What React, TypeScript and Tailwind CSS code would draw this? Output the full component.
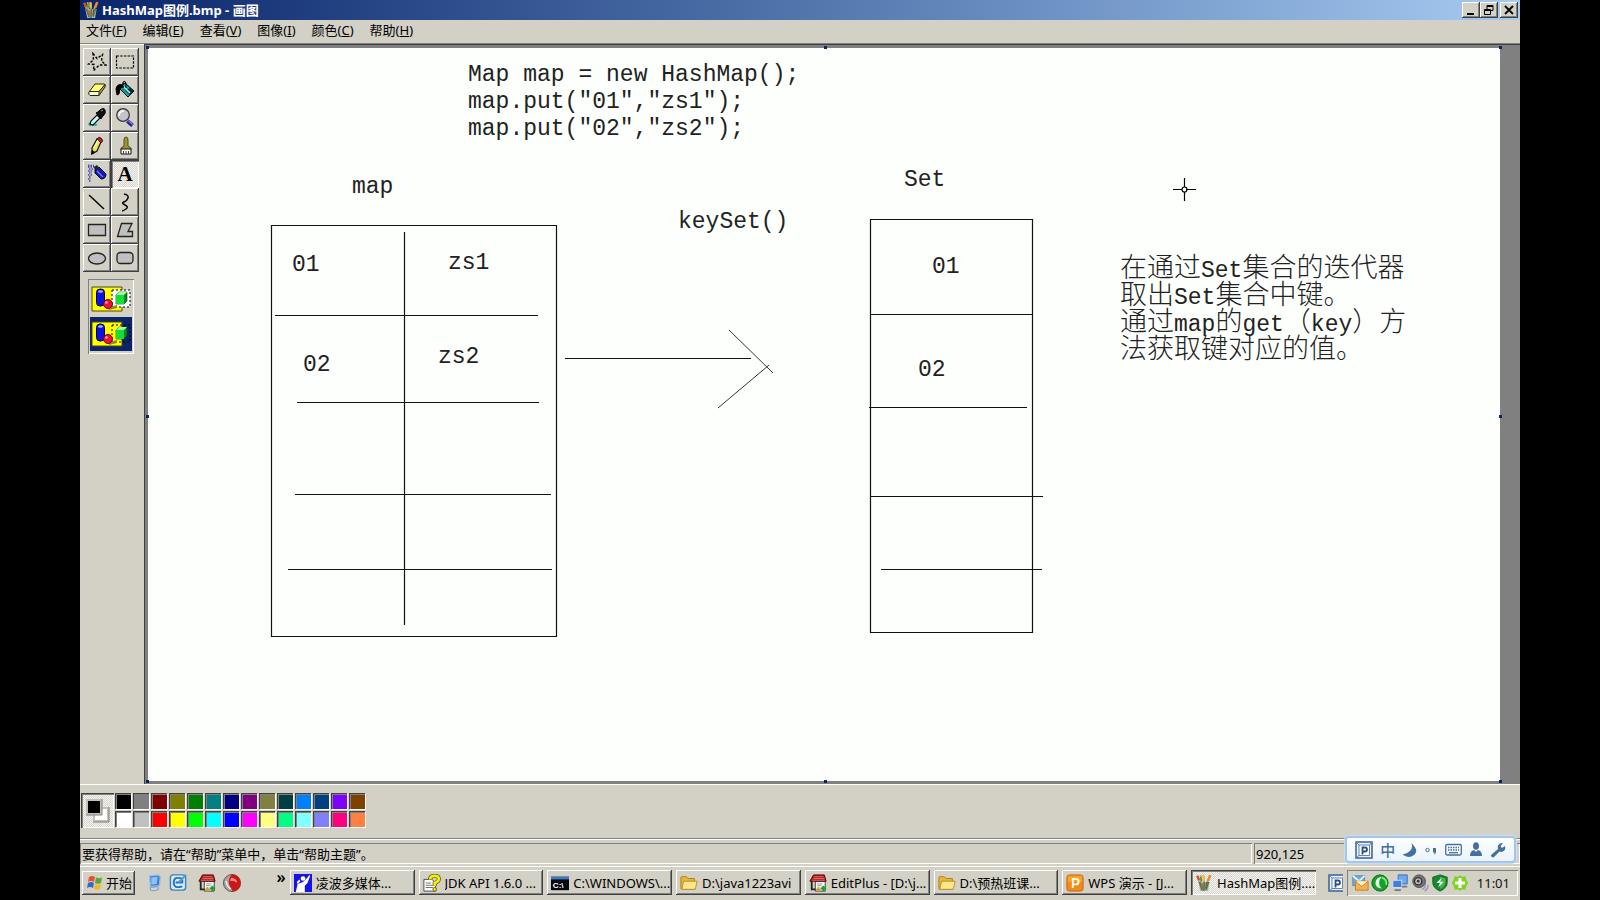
import type { ReactNode } from "react";

const UI = "font-['Noto_Sans','Noto_Sans_CJK_SC',sans-serif]";
const RAISED = "shadow-[inset_-1px_-1px_0_#404040,inset_1px_1px_0_#ffffff,inset_-2px_-2px_0_#808080]";
const PRESSED = "shadow-[inset_1px_1px_0_#404040,inset_2px_2px_0_#808080,inset_-1px_-1px_0_#ffffff]";
const SUNKEN = "shadow-[inset_1px_1px_0_#808080,inset_-1px_-1px_0_#ffffff]";
const DITHER = "bg-[repeating-conic-gradient(#f6f4f0_0_25%,#d8d5cc_0_50%)] bg-[length:2px_2px]";

function PaintIcon() {
  return (
    <svg width="18" height="18" viewBox="0 0 16 16" aria-hidden="true">
      <path d="M2 2l3 7M5 1l1 8M8 2v7M13 2l-3 7" stroke="#c9a27a" strokeWidth="1.6" fill="none" />
      <path d="M2 1.5l1.6 4" stroke="#d6492e" strokeWidth="2" />
      <path d="M7.5 1v5" stroke="#e8c33c" strokeWidth="2" />
      <path d="M13.6 1l-2 5" stroke="#e98a2b" strokeWidth="2.2" />
      <path d="M5 2.5l.6 4" stroke="#4f9b46" strokeWidth="1.5" />
      <path d="M3 7h10l-1.4 8.2H4.6z" fill="#a9b7b8" />
      <path d="M4 7l2.4 7.4M8.3 7l-.4 8M12 7l-2.2 7" stroke="#4b7d4e" strokeWidth="1.5" />
      <path d="M6 8l1 5" stroke="#d4552c" strokeWidth="1.4" />
      <path d="M10.4 7l-.8 6" stroke="#7c5a36" strokeWidth="1.2" />
    </svg>
  );
}

function Svg({ children, size = 20 }: { children: ReactNode; size?: number }) {
  return (
    <svg width={size} height={size} viewBox="0 0 20 20" fill="none" aria-hidden="true">
      {children}
    </svg>
  );
}

const tools: { name: string; icon: ReactNode; active?: boolean }[] = [
  {
    name: "任意形状的裁剪",
    icon: <Svg><path d="M6 1.500l4 5 5.500-4-1 6.500 4.500 4h-6.500L6.500 18.500l.5-6-5.500-.5 5-4z" stroke="#000" strokeWidth="1.400" strokeDasharray="2.500 1.700" /></Svg>,
  },
  {
    name: "选定",
    icon: <Svg><path d="M1.500 4h17v12h-17z" stroke="#000" strokeWidth="1.200" strokeDasharray="2.500 1.200" /></Svg>,
  },
  {
    name: "橡皮",
    icon: (
      <Svg>
        <path d="M2 12l6-8h9q2 0 1 3l-6 8H3q-2 0-1-3z" fill="#a8a840" />
        <path d="M2 11l6-7h10l-6 7z" fill="#ffff66" />
        <path d="M2 11.500h10v4H2z" fill="#ffffc8" />
        <path d="M2 12l6-8h9q2 0 1 3l-6 8.500H3q-2-1-1-3.500M2.500 11.500H12v4M12 11.500l6-7" stroke="#222" />
      </Svg>
    ),
  },
  {
    name: "用颜色填充",
    icon: (
      <Svg>
        <path d="M6 5l4-2 9 8-6 6-8-8z" fill="#189a9a" stroke="#000" />
        <path d="M8 8l7 7 4-4-4-3-4 2z" fill="#002d35" />
        <path d="M8 6l7 7" stroke="#a9ffff" strokeWidth="1.500" />
        <path d="M8 5Q2 3 1 9l1 6 2-1 1-6 4-1" fill="#000" stroke="#000" />
        <path d="M8 5V2q2-2 3 1v5" stroke="#000" />
      </Svg>
    ),
  },
  {
    name: "取色",
    icon: (
      <Svg>
        <path d="M1 15h7l3 2-3 1H2zM3 13h4l-1 4H2z" fill="#27b5b5" />
        <path d="M10 7l3 3-7 7-3-1 1-3z" fill="#c6ffff" stroke="#111" strokeWidth="1.200" />
        <path d="M9 5l2-1 2-2q4-3 5 0t-1 5l-2 2-1 2z" fill="#111" stroke="#000" />
        <path d="M14 3l2-1" stroke="#999" />
      </Svg>
    ),
  },
  {
    name: "放大镜",
    icon: (
      <Svg>
        <path d="M12.500 13l5 4.500" stroke="#202098" strokeWidth="4" />
        <path d="M13.500 12.500l4 4" stroke="#8989e8" strokeWidth="1.200" />
        <circle cx="8" cy="7" r="6.300" fill="#c4c4c8" stroke="#333" strokeWidth="1.200" />
        <path d="M4 8q0-5 5-5" stroke="#fff" strokeWidth="1.500" />
      </Svg>
    ),
  },
  {
    name: "铅笔",
    icon: (
      <Svg>
        <path d="M5 12l5-9 4 3-4 9-5 3z" fill="#e8e850" stroke="#111" strokeWidth="1.200" />
        <path d="M10 3q2-3 4.500-.5T14 7z" fill="#c02020" stroke="#401010" />
        <path d="M7 12l4-8" stroke="#fff" />
        <path d="M5 14l3 2-4 3z" fill="#000" />
      </Svg>
    ),
  },
  {
    name: "刷子",
    icon: (
      <Svg>
        <path d="M9 10V4q0-3 2-3t2 3v6l3 2v2H6v-2z" fill="#9a962c" stroke="#555017" />
        <path d="M6 13h10v5H6z" fill="#fff" stroke="#111" />
        <path d="M8.500 15v3M11 15v3M13.500 15v3" stroke="#444" />
      </Svg>
    ),
  },
  {
    name: "喷枪",
    icon: (
      <Svg>
        <path d="M1 3h9M2 5h6M1 7h5M2 9h3M1 11h4M2 13h2M1 15h3M2 17h2M1 1.500h6" stroke="#4646b8" strokeWidth="1.500" strokeDasharray="1.500 1" />
        <path d="M8 6l4-3 7 7q0 5-5 5L8 9z" fill="#1616b4" stroke="#000" />
        <path d="M7 3l3-2 2 3-3 3z" fill="#222" />
        <path d="M10 7l6 6" stroke="#5c82ff" strokeWidth="1.500" />
      </Svg>
    ),
  },
  {
    name: "文字",
    active: true,
    icon: <span className="font-['Liberation_Serif',serif] text-[21px] leading-5 font-bold text-black">A</span>,
  },
  { name: "直线", icon: <Svg><path d="M2 3l15 14" stroke="#000" strokeWidth="1.500" /></Svg> },
  { name: "曲线", icon: <Svg><path d="M9 2q5 1 4 4t-4 4 1 3 1 4-4 2" stroke="#000" strokeWidth="1.500" /></Svg> },
  { name: "矩形", icon: <Svg><path d="M1.500 4.500h17v11h-17z" fill="#c0c0c0" stroke="#222" strokeWidth="1.300" /></Svg> },
  { name: "多边形", icon: <Svg><path d="M6.500 3.500h10.500L13 11.500h4.500v5h-15z" fill="#c0c0c0" stroke="#222" strokeWidth="1.300" /></Svg> },
  { name: "椭圆", icon: <Svg><ellipse cx="10" cy="10.500" rx="8.500" ry="5.500" fill="#c0c0c0" stroke="#222" strokeWidth="1.300" /></Svg> },
  { name: "圆角矩形", icon: <Svg><rect x="2" y="4.500" width="16" height="11" rx="3.500" fill="#c0c0c0" stroke="#222" strokeWidth="1.300" /></Svg> },
];

function ShapesIcon({ opaque }: { opaque?: boolean }) {
  return (
    <svg width="42" height="30" viewBox="0 0 42 30" aria-hidden="true">
      <path d="M2 3h30v24H2z" fill="#ffff00" stroke="#4a4a00" />
      {opaque && <path d="M22 6h18v17H22z" fill="#fff" />}
      <path d="M22 6h18v17H22z" fill="none" stroke="#000" strokeDasharray="2 2" />
      <rect x="6.500" y="5" width="8" height="17" rx="3.500" fill="#1111dd" stroke="#000060" />
      <ellipse cx="10.500" cy="7.500" rx="2.500" ry="1.300" fill="#a5b4ff" />
      <path d="M19 23l8-2v3l-8 2z" fill="#8a8a30" />
      <circle cx="18" cy="20" r="4.500" fill="#ee1133" stroke="#700" />
      <circle cx="16.500" cy="18.500" r="1.300" fill="#ffb0b0" />
      <path d="M26 11l3-3h8v9l-3 3h-8z" fill="#0c8a18" stroke="#033" strokeWidth=".6" />
      <path d="M26 11h8v9h-8z" fill="#18dd33" />
      <path d="M26 11l3-3h8l-3 3z" fill="#a0ffa0" />
    </svg>
  );
}

const palette: [string, string][] = [
  ["黑", "bg-[#000000]"], ["深灰", "bg-[#808080]"], ["暗红", "bg-[#800000]"], ["橄榄", "bg-[#808000]"],
  ["深绿", "bg-[#008000]"], ["蓝绿", "bg-[#008080]"], ["海军蓝", "bg-[#000080]"], ["紫", "bg-[#800080]"],
  ["卡其", "bg-[#808040]"], ["墨绿", "bg-[#004040]"], ["天蓝", "bg-[#0080ff]"], ["藏青", "bg-[#004080]"],
  ["蓝紫", "bg-[#8000ff]"], ["棕", "bg-[#804000]"],
  ["白", "bg-[#ffffff]"], ["浅灰", "bg-[#c0c0c0]"], ["红", "bg-[#ff0000]"], ["黄", "bg-[#ffff00]"],
  ["绿", "bg-[#00ff00]"], ["青", "bg-[#00ffff]"], ["蓝", "bg-[#0000ff]"], ["品红", "bg-[#ff00ff]"],
  ["浅黄", "bg-[#ffff80]"], ["春绿", "bg-[#00ff80]"], ["浅青", "bg-[#80ffff]"], ["淡紫", "bg-[#8080ff]"],
  ["玫红", "bg-[#ff0080]"], ["橙", "bg-[#ff8040]"],
];

const menus = [["文件", "F"], ["编辑", "E"], ["查看", "V"], ["图像", "I"], ["颜色", "C"], ["帮助", "H"]];

const labels: { text: string; place: string }[] = [
  { text: "map", place: "left-[204px] top-[126px]" },
  { text: "keySet()", place: "left-[530px] top-[161px]" },
  { text: "Set", place: "left-[756px] top-[119px]" },
  { text: "01", place: "left-[144px] top-[204px]" },
  { text: "zs1", place: "left-[300px] top-[202px]" },
  { text: "02", place: "left-[155px] top-[304px]" },
  { text: "zs2", place: "left-[290px] top-[296px]" },
  { text: "01", place: "left-[784px] top-[206px]" },
  { text: "02", place: "left-[770px] top-[309px]" },
];

function Latin({ children }: { children: ReactNode }) {
  return <span className="text-[23px] leading-[0px] font-normal">{children}</span>;
}

function Drawing() {
  return (
    <div className="relative h-full min-h-[640px] w-full overflow-hidden bg-[#fdfffd] text-[23px] leading-[27px] text-[#222] font-['Liberation_Mono','Noto_Sans_CJK_SC',monospace]">
      <svg className="absolute inset-0 h-full w-full" fill="none" stroke="#111" strokeWidth="1.200" aria-label="HashMap 图例">
        <path d="M123.500 177.500h285v411h-285zM256.500 184v393M127 267.500h263M149 354.500h242M147 446.500h256M140 521.500h264" />
        <path d="M417 310.500h186" />
        <path d="M581 282l44 43M570 360l51-43" strokeWidth="1" stroke="#333" />
        <path d="M722.500 171.500h162v413h-162zM722 266.500h162M721 359.500h158M722 448.500h173M733 521.500h161" />
        <path d="M1025 141.500h9m4 0h10M1036.500 130v9m0 5v9" stroke="#000" />
        <circle cx="1036.500" cy="141.500" r="2.500" stroke="#000" />
      </svg>
      <pre className="absolute top-[14px] left-[320px] font-[inherit]">{`Map map = new HashMap();
map.put("01","zs1");
map.put("02","zs2");`}</pre>
      {labels.map((l) => (
        <span key={l.place} className={`absolute ${l.place}`}>{l.text}</span>
      ))}
      <p className="absolute top-[209px] left-[972px] text-[27px] leading-[27px] font-light whitespace-nowrap">
        在通过<Latin>Set</Latin>集合的迭代器<br />
        取出<Latin>Set</Latin>集合中键。<br />
        通过<Latin>map</Latin>的<Latin>get</Latin>（<Latin>key</Latin>）方<br />
        法获取键对应的值。
      </p>
    </div>
  );
}

const handles = [
  "-left-0.5 -top-0.5", "left-1/2 -top-0.5", "-right-0.5 -top-0.5",
  "-left-0.5 top-1/2", "-right-0.5 top-1/2",
  "-left-0.5 -bottom-0.5", "left-1/2 -bottom-0.5", "-right-0.5 -bottom-0.5",
];

function FolderIcon() {
  return (
    <Svg size={18}>
      <path d="M1 4q0-1 1-1h5l2 2h7v12H2q-1 0-1-1z" fill="#e8b83a" stroke="#a97d1a" />
      <path d="M4 8h15l-2 9H2z" fill="#ffe88a" stroke="#b98c22" />
    </Svg>
  );
}

function EditPlusIcon() {
  return (
    <Svg size={18}>
      <path d="M7 8h11v11H7z" fill="#fff" stroke="#333" />
      <path d="M5 1h12l2 7H1z" fill="#b41f1f" stroke="#400" />
      <path d="M6 3h10M5 5h12M3.500 7h14" stroke="#f08080" strokeWidth=".8" />
      <path d="M3 8v9h4" stroke="#222" strokeWidth="2" />
      <path d="M9 11h6M9 13h5" stroke="#888" />
      <path d="M8 17h5m-2.500-2.500v5" stroke="#d69a1a" strokeWidth="2" />
      <path d="M13 16h6m-3-3v6" stroke="#1f9a2f" strokeWidth="2.400" />
    </Svg>
  );
}

const tasks: { title: string; icon: ReactNode; active?: boolean }[] = [
  {
    title: "凌波多媒体...",
    icon: (
      <Svg size={18}>
        <path d="M0 0h20v20H0z" fill="#1414e6" />
        <circle cx="10" cy="5" r="2.600" fill="#fff" />
        <path d="M2 20l2-9 6-2 5-5 2-3 1 1-3 8-3 3v7zM3 9l3-3 1 2-3 3z" fill="#fff" />
      </Svg>
    ),
  },
  {
    title: "JDK API 1.6.0 ...",
    icon: (
      <Svg size={18}>
        <path d="M1 6h9l4 4v9H1z" fill="#fff" stroke="#444" />
        <path d="M3 10h6M3 12.500h8M3 15h8" stroke="#666" />
        <path d="M8 6q0-4 5-4t4.500 4q0 2-4.500 4v3" stroke="#5a5a00" strokeWidth="4.500" />
        <path d="M8 6q0-4 5-4t4.500 4q0 2-4.500 4v3" stroke="#f6ee10" strokeWidth="3" />
        <circle cx="13" cy="17" r="2" fill="#f6ee10" stroke="#5a5a00" />
      </Svg>
    ),
  },
  {
    title: "C:\\WINDOWS\\...",
    icon: (
      <Svg size={18}>
        <path d="M0 3h20v15H0z" fill="#050a10" />
        <path d="M0 3h20v3H0z" fill="#3f78c8" />
        <text x="2" y="15" fontSize="9" fontWeight="700" fill="#fff" fontFamily="Liberation Sans">C:\</text>
      </Svg>
    ),
  },
  { title: "D:\\java1223avi", icon: <FolderIcon /> },
  { title: "EditPlus - [D:\\j...", icon: <EditPlusIcon /> },
  { title: "D:\\预热班课...", icon: <FolderIcon /> },
  {
    title: "WPS 演示 - [J...",
    icon: (
      <Svg size={18}>
        <rect x="1" y="1" width="18" height="18" rx="3" fill="#f28a14" stroke="#cf5c0b" />
        <path d="M2 2h16v7H2z" fill="#ffb52f" opacity=".6" />
        <path d="M7.500 15.500V5.500h3.500q3 0 3 3t-3 3H7.500" stroke="#fff" strokeWidth="2" />
      </Svg>
    ),
  },
  { title: "HashMap图例....", icon: <PaintIcon />, active: true },
];

function PBadge() {
  return (
    <svg width="18" height="18" viewBox="0 0 18 18" fill="none" aria-hidden="true">
      <path d="M1 1h16v16H1z" fill="#e9f1fa" stroke="#3b5f94" strokeWidth="1.500" />
      <path d="M4 4h10.500v10.500H4z" fill="#fff" stroke="#5f83b5" />
      <path d="M1 1l3 3M4 14.500L1 17M14.500 4L17 1" stroke="#5f83b5" />
      <path d="M7.500 13.500v-7H10q2 0 2 2t-2 2H7.500" stroke="#2d4f86" strokeWidth="1.800" />
    </svg>
  );
}

function ImeBar() {
  return (
    <div className="absolute right-1 bottom-[37px] flex h-[27px] w-[171px] items-center justify-between rounded border-2 border-[#a3c6ea] bg-gradient-to-b from-white to-[#e9f3fc] px-2 text-[#44709f] shadow-[0_0_0_1px_#c8def2]">
      <PBadge />
      <span className="text-[15px] leading-5 font-medium">中</span>
      <svg width="16" height="16" viewBox="0 0 16 16" fill="#44709f" aria-hidden="true"><path d="M9.500 1q3 9-9 11.500 6 4.500 11.500.5T9.500 1z" /></svg>
      <svg width="12" height="14" viewBox="0 0 12 14" aria-hidden="true">
        <circle cx="2.500" cy="7" r="1.700" fill="none" stroke="#44709f" />
        <path d="M8 5h3v4q0 2-2.500 3 1-1 1-2.500H8z" fill="#44709f" />
      </svg>
      <svg width="17" height="13" viewBox="0 0 17 13" fill="none" stroke="#44709f" aria-hidden="true">
        <rect x=".7" y="1.500" width="15.600" height="10.500" rx="1.500" strokeWidth="1.300" />
        <path d="M3 4.500h11M3 7h11" strokeWidth="1.500" strokeDasharray="1.500 1" />
        <path d="M4 9.700h9" strokeWidth="1.300" />
      </svg>
      <svg width="14" height="15" viewBox="0 0 14 15" fill="#44709f" aria-hidden="true">
        <ellipse cx="7" cy="4" rx="3" ry="3.800" />
        <path d="M1 14q0-5 4-6l2 2 2-2q4 1 4 6z" />
      </svg>
      <svg width="16" height="16" viewBox="0 0 16 16" fill="#44709f" aria-hidden="true">
        <path d="M1 13L8 7Q7 3 10 1.500q2-1 3-.3L10.500 4l1.500 2 3-2q1 4-2 5.500-2 .8-3.500 0L3.500 15.500Q1 15.500 1 13z" />
      </svg>
    </div>
  );
}

function QuickLaunch() {
  return (
    <div className="flex items-center gap-1.5 pl-2.5">
      <a href="#desktop" aria-label="显示桌面">
        <Svg size={18}>
          <path d="M5 2l10-1 2 2-1 10-10 1z" fill="#3d7ed2" stroke="#9bbce6" strokeWidth="1.500" />
          <path d="M7 4l7-1-1 8-6 1z" fill="#8cc2fa" />
          <path d="M6 15l8-1 1 3q-5 3-9 1z" fill="#c6d6ea" stroke="#7992b5" />
        </Svg>
      </a>
      <a href="#mail" aria-label="邮件">
        <Svg size={19}>
          <rect x="1.500" y="2" width="16" height="16" rx="3" fill="#d8ecfb" stroke="#3983be" strokeWidth="1.500" />
          <path d="M14 6Q5 3 5 10t9 4M7 10h7V7" stroke="#2678bd" strokeWidth="2" />
          <path d="M10 10l8-8" stroke="#4a9ad3" strokeWidth="2" />
        </Svg>
      </a>
      <a href="#editplus" aria-label="EditPlus" className="ml-1"><EditPlusIcon /></a>
      <a href="#player" aria-label="播放器">
        <Svg size={20}>
          <circle cx="10" cy="10" r="8.500" fill="#a9a7a7" stroke="#6b4a4a" />
          <path d="M10 1.500Q3 8 11 18.500q8-1 7.500-9T10 1.500z" fill="#c91818" />
          <path d="M9 5q6 0 6 5-3-3-7-2z" fill="#ff8d80" />
          <path d="M4 8q1 6 5 8" stroke="#efefef" strokeWidth="1.500" />
        </Svg>
      </a>
    </div>
  );
}

function Tray() {
  return (
    <div className={`flex h-[26px] shrink-0 items-center gap-0.5 pr-2 pl-1 ${SUNKEN}`}>
      <Svg size={18}>
        <path d="M2 2h13v11H2z" fill="#6fa9dc" stroke="#5586b5" />
        <path d="M2 2l7 6 6-6" stroke="#e4f2ff" strokeWidth="2" />
        <path d="M5 8h14v10H5z" fill="#f6b04d" stroke="#c97c1d" />
        <path d="M5 8l7 6 7-6" fill="#fff3d0" stroke="#c97c1d" />
      </Svg>
      <Svg size={18}>
        <circle cx="10" cy="10" r="9" fill="#14a224" stroke="#0b5f16" />
        <path d="M12 3Q5 4 5 10t7 6q-3-2-3-6t3-7z" fill="#eaffea" />
        <path d="M12 4q6 2 5 8" stroke="#7dee7d" strokeWidth="2" />
      </Svg>
      <Svg size={18}>
        <path d="M8 1h10v10H8z" fill="#6cabf4" stroke="#3a67a8" />
        <path d="M2 7h10v8H2z" fill="#3e7fe0" stroke="#dce6f2" />
        <path d="M4 18h7M12 14h6" stroke="#6b7a90" strokeWidth="2" />
      </Svg>
      <Svg size={18}>
        <circle cx="9" cy="8" r="7" fill="#777" stroke="#444" />
        <circle cx="8" cy="8" r="4" fill="#bbb" stroke="#333" strokeWidth="1.500" />
        <circle cx="8" cy="8" r="1.500" fill="#333" />
        <path d="M12 17q4-1 4-6M15 19q4-2 4-7" stroke="#8d8dc5" strokeWidth="1.300" />
      </Svg>
      <Svg size={18}>
        <path d="M10 1l8 2.500v6q0 6-8 9.500-8-3.500-8-9.500v-6z" fill="#148a2a" stroke="#0b5a1a" />
        <path d="M10 3l6 2v4q0 5-6 8z" fill="#3cb648" />
        <path d="M12 4l-6 6h4l-2 5 6-6.500h-4z" fill="#fff" />
      </Svg>
      <Svg size={18}>
        <path d="M10 1l2 2 4-.5 1 4 2 3.500-2 3.500-1 4-4-.5-2 2-2-2-4 .5-1-4L1 10l2-3.500 1-4 4 .5z" fill="#7ed321" />
        <path d="M10 4.500v11M4.500 10h11" stroke="#fff" strokeWidth="3.500" />
      </Svg>
      <time className="ml-1.5 text-[13px] text-[#111]">11:01</time>
    </div>
  );
}

export default function App() {
  return (
    <div className={`min-h-screen bg-black px-20 ${UI} text-[13px] leading-5 text-black`}>
      <div className="relative flex min-h-screen flex-col bg-[#d3d0c6]">
        <header className="flex h-5 items-center bg-gradient-to-r from-[#0a246a] to-[#a6caf0] pr-0.5 pl-0.5">
          <PaintIcon />
          <h1 className="ml-0.5 flex-1 text-[13px] leading-5 font-bold text-white">HashMap图例.bmp - 画图</h1>
          <button aria-label="最小化" className={`h-4 w-[18px] bg-[#d3d0c6] ${RAISED}`}>
            <svg width="18" height="16" aria-hidden="true"><path d="M5 11h7v2H5z" /></svg>
          </button>
          <button aria-label="还原" className={`h-4 w-[18px] bg-[#d3d0c6] ${RAISED}`}>
            <svg width="18" height="16" fill="none" stroke="#000" aria-hidden="true">
              <path d="M7 7V3.500h6v5h-2.500M7 4.500h6M4.500 7.500h6v5h-6zM4.500 8.500h6" />
            </svg>
          </button>
          <button aria-label="关闭" className={`ml-0.5 h-4 w-[18px] bg-[#d3d0c6] ${RAISED}`}>
            <svg width="18" height="16" aria-hidden="true"><path d="M5 4l8 8M13 4l-8 8" stroke="#000" strokeWidth="1.800" /></svg>
          </button>
        </header>

        <nav className="flex h-[23px] items-start gap-4 px-1.5">
          {menus.map(([name, key]) => (
            <button key={key}>{name}(<u>{key}</u>)</button>
          ))}
        </nav>

        <main className="flex flex-1 border-t border-[#808080]">
          <aside className="flex w-16 shrink-0 flex-col items-center border-t border-white pt-[3px] pr-1 pl-0.5">
            <div className="grid grid-cols-2">
              {tools.map((t) => (
                <button key={t.name} aria-label={t.name} className={`flex size-7 items-center justify-center ${t.active ? `${DITHER} ${PRESSED}` : RAISED}`}>
                  {t.icon}
                </button>
              ))}
            </div>
            <div className={`mt-[7px] flex flex-col px-0.5 pt-0.5 pb-[3px] ${SUNKEN}`}>
              <button aria-label="不透明处理" className="flex h-9 items-center justify-center"><ShapesIcon opaque /></button>
              <button aria-label="透明处理" className="flex h-[34px] items-center justify-center bg-[#0a246a]"><ShapesIcon /></button>
            </div>
          </aside>
          <section className="flex min-w-0 flex-1 border-t border-l border-[#404040] bg-[#808080] pt-[3px] pr-5 pb-[3px] pl-[3px]">
            <div className="relative flex min-w-0 flex-1">
              <Drawing />
              {handles.map((h) => (
                <span key={h} className={`absolute size-[3px] bg-[#0a246a] ${h}`} />
              ))}
            </div>
          </section>
        </main>

        <section aria-label="颜料盒" className="flex h-[54px] items-start border-t border-white pt-2 pl-px">
          <div className={`mr-px flex h-[35px] w-[33px] items-center justify-center ${DITHER} ${PRESSED}`}>
            <svg width="25" height="25" aria-hidden="true">
              <path d="M9 10h14v13H9z" fill="#fff" stroke="#c4c0b8" strokeWidth="2" />
              <path d="M8 24h16V9" fill="none" stroke="#808080" />
              <path d="M2 2h14v14H2z" fill="#000" stroke="#c4c0b8" strokeWidth="2" />
              <path d="M1 17h16V1" fill="none" stroke="#808080" />
            </svg>
          </div>
          <div className="grid grid-cols-14 gap-0.5">
            {palette.map(([name, bg]) => (
              <button key={name} aria-label={name} className={`size-4 ${bg} shadow-[inset_1px_1px_0_#404040,inset_2px_2px_0_#808080,1px_1px_0_#ffffff]`} />
            ))}
          </div>
        </section>

        <footer className="flex h-7 gap-0.5 border-t border-[#808080] pt-1 pb-0.5 shadow-[inset_0_1px_0_#ffffff]">
          <p className={`flex-1 pl-0.5 leading-[22px] ${SUNKEN}`}>要获得帮助，请在“帮助”菜单中，单击“帮助主题”。</p>
          <p className={`w-[132px] pl-0.5 leading-[22px] ${SUNKEN}`}>920,125</p>
          <p className={`w-[132px] ${SUNKEN}`} />
        </footer>

        <div className="flex h-[34px] items-center border-t border-white pr-0.5 pb-0.5 pl-0.5">
          <button className={`flex h-6 w-[53px] items-center gap-0.5 pl-1 ${RAISED}`}>
            <svg width="18" height="18" viewBox="0 0 18 18" aria-hidden="true">
              <path d="M3 3q3-2 6 0L8 8q-3-2-6 0z" fill="#e9512c" />
              <path d="M10 3.500q3 1.500 6 0L15 9q-3 1.500-6 0z" fill="#5aa83a" />
              <path d="M2 9q3-2 6 0l-1 5q-3-2-6 0z" fill="#3568c8" />
              <path d="M9 10q3 1.500 6 0l-1 5q-3 1.500-6 0z" fill="#f2b920" />
            </svg>
            <span>开始</span>
          </button>
          <QuickLaunch />
          <button aria-label="更多快速启动项" className="mr-1 ml-auto self-start text-[16px] leading-5 font-semibold">»</button>
          <div className="flex w-[1026px] min-w-0 gap-1">
            {tasks.map((t) => (
              <button key={t.title} className={`flex h-[25px] min-w-0 flex-1 items-center gap-1 pl-1 whitespace-nowrap ${t.active ? `${DITHER} ${PRESSED}` : RAISED}`}>
                <span className="shrink-0">{t.icon}</span>
                <span className="truncate">{t.title}</span>
              </button>
            ))}
          </div>
          <div className="mr-1 ml-3 w-[15px] shrink-0 overflow-hidden"><PBadge /></div>
          <Tray />
        </div>

        <ImeBar />
      </div>
    </div>
  );
}
